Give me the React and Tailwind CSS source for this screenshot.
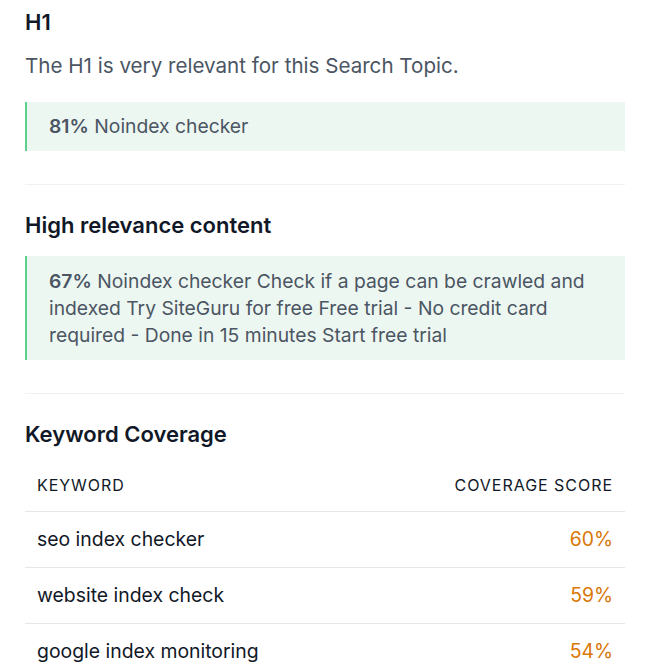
import React from "react";

const rows = [
  ["seo index checker", "60%"],
  ["website index check", "59%"],
  ["google index monitoring", "54%"],
];

export default function App() {
  return (
    <div className="bg-white min-h-screen px-[25px] pt-[8px] text-[#111827]" style={{ fontFamily: "Inter, 'Noto Sans', sans-serif" }}>
      <div className="w-[600px]">
        <h2 className="text-[22px] leading-[28px] font-semibold text-[#111827]">H1</h2>
        <p className="mt-[16px] text-[20.6px] leading-[28px] text-[#4b5563]">The H1 is very relevant for this Search Topic.</p>
        <div className="mt-[22px] border-l-2 border-[#5cd08d] bg-[#edf7f1] pl-[22px] pr-4 pt-[11px] pb-[11px] text-[19.3px] leading-[27px] text-[#4b5563]">
          <span className="font-semibold">81%</span> Noindex checker
        </div>
        <div className="mt-[33px] border-t border-[#f0f1f3]" />
        <h2 className="mt-[26px] text-[22px] leading-[28px] font-semibold text-[#111827]">High relevance content</h2>
        <div className="mt-[17px] border-l-2 border-[#5cd08d] bg-[#edf7f1] pl-[22px] pr-4 pt-[12px] pb-[11px] text-[19.3px] leading-[27px] text-[#4b5563]">
          <span className="font-semibold">67%</span> Noindex checker Check if a page can be crawled and indexed Try SiteGuru for free Free trial - No credit card required - Done in 15 minutes Start free trial
        </div>
        <div className="mt-[33px] border-t border-[#f0f1f3]" />
        <h2 className="mt-[26px] text-[22px] leading-[28px] font-semibold text-[#111827]">Keyword Coverage</h2>
        <div className="mt-[10px]">
          <div className="flex justify-between items-center h-[54px] px-[12px] border-b border-[#e5e7eb] text-[16px] tracking-[0.06em] uppercase text-[#111827]">
            <span>Keyword</span>
            <span>Coverage Score</span>
          </div>
          {rows.map(([k, v]) => (
            <div key={k} className="flex justify-between items-center h-[56px] px-[12px] border-b border-[#e5e7eb] text-[19.4px] text-[#111827]">
              <span>{k}</span>
              <span className="text-[#d97706]">{v}</span>
            </div>
          ))}
        </div>
      </div>
    </div>
  );
}
